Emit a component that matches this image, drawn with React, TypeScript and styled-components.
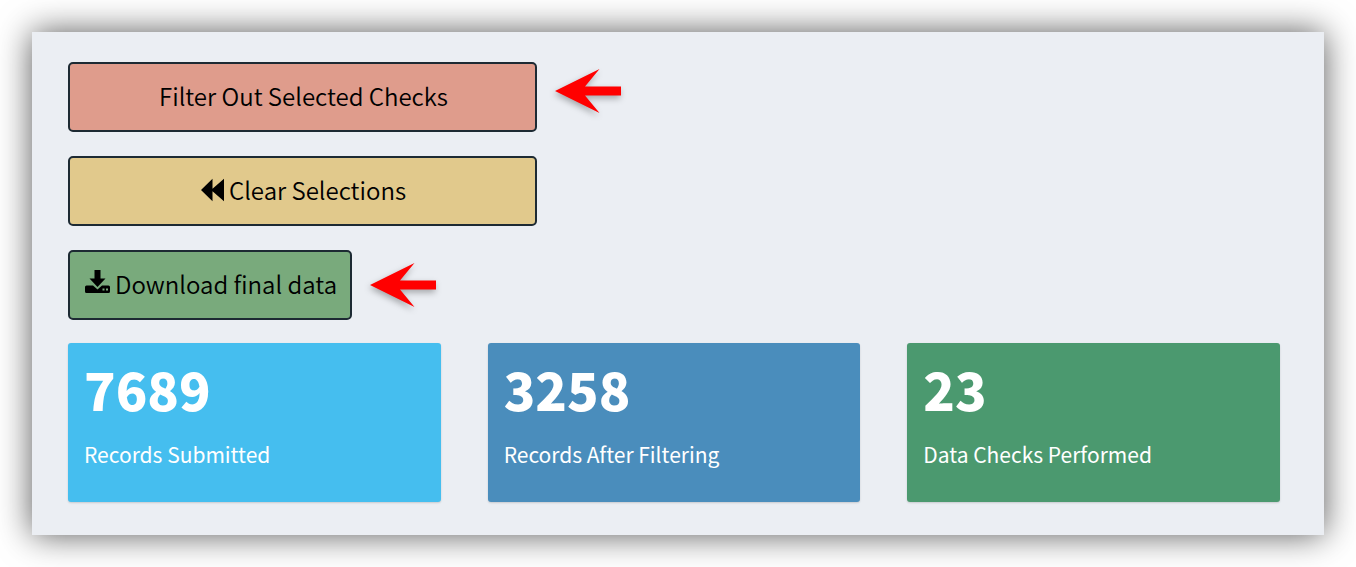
import React from "react";
import styled, { createGlobalStyle } from "styled-components";

const GlobalStyle = createGlobalStyle`
  *, *::before, *::after { box-sizing: border-box; }
  body {
    margin: 0;
    background: #fff;
    font-family: "Noto Sans CJK SC", "Open Sans", sans-serif;
  }
`;

const Page = styled.div`
  padding: 32px;
`;

const Panel = styled.main`
  display: flex;
  flex-direction: column;
  gap: 23px;
  padding: 30px 44px 33px 36px;
  background: #ebeef3;
  box-shadow: 0 0 32px rgba(0, 0, 0, 0.66);
`;

const Actions = styled.div`
  display: flex;
  flex-direction: column;
  gap: 24px;
`;

const ActionRow = styled.div`
  display: flex;
  align-items: center;
  gap: 18px;
`;

const ActionButton = styled.button<{ $color: string; $wide?: boolean }>`
  display: flex;
  align-items: center;
  justify-content: center;
  gap: 5px;
  flex: 0 1 ${(p) => (p.$wide ? "469px" : "auto")};
  height: 70px;
  padding: 0 13px 2px 15px;
  border: 2px solid #1d2a33;
  border-radius: 5px;
  background: ${(p) => p.$color};
  color: #000;
  font-family: inherit;
  font-size: 24px;
  font-weight: 350;
  line-height: 36px;
  white-space: nowrap;
  cursor: pointer;
`;

const Pointer = styled.svg<{ $raised?: boolean }>`
  flex: none;
  overflow: visible;
  margin-bottom: ${(p) => (p.$raised ? "12px" : "0")};
  filter: drop-shadow(-1px 3px 3px rgba(0, 0, 0, 0.3));
`;

const Stats = styled.section`
  display: grid;
  grid-template-columns: repeat(3, 1fr);
  gap: 47px;
`;

const StatCard = styled.article<{ $color: string }>`
  height: 159px;
  padding: 14px 16px;
  border-radius: 3px;
  background: ${(p) => p.$color};
  box-shadow: 0 1px 2px rgba(0, 0, 0, 0.15);
  color: #fff;
`;

const StatValue = styled.h3`
  margin: 0 0 17px;
  font-size: 52px;
  font-weight: 900;
  line-height: 64px;
`;

const StatLabel = styled.p`
  margin: 0;
  font-size: 21px;
  line-height: 32px;
`;

function PointerArrow({ raised }: { raised?: boolean }) {
  return (
    <Pointer $raised={raised} width="66" height="44" viewBox="0 0 66 44" aria-hidden="true">
      <path d="M0 22 44.500 0 30 17.500H66v9H30L44.500 44Z" fill="#f00" />
    </Pointer>
  );
}

function BackwardIcon() {
  return (
    <svg width="23" height="24" viewBox="0 0 23 24" aria-hidden="true">
      <path d="M0 12 11.500 .8V10.800L23 .8V23.200L11.500 13.200V23.200Z" fill="#000" />
    </svg>
  );
}

function DownloadIcon() {
  return (
    <svg width="25" height="28" viewBox="0 0 25 28" aria-hidden="true">
      <path d="M9.500 0h6v8.500h5L12.500 17 4.500 8.500h5Z" fill="#000" />
      <path
        fillRule="evenodd"
        d="M1.500 15.500H8L12.500 19.500 17 15.500h6.500q1.500 0 1.500 1.500v4.500q0 1.500-1.500 1.500h-22Q0 23 0 21.500V17q0-1.500 1.500-1.500ZM17.500 18.500v2h2v-2ZM21 18.500v2h2v-2Z"
        fill="#000"
      />
    </svg>
  );
}

const stats = [
  { value: "7689", label: "Records Submitted", color: "#45beef" },
  { value: "3258", label: "Records After Filtering", color: "#4a8dbc" },
  { value: "23", label: "Data Checks Performed", color: "#4b996f" },
];

export default function App() {
  return (
    <Page>
      <GlobalStyle />
      <Panel>
        <Actions>
          <ActionRow>
            <ActionButton type="button" $color="#df9c8c" $wide>
              Filter Out Selected Checks
            </ActionButton>
            <PointerArrow raised />
          </ActionRow>
          <ActionRow>
            <ActionButton type="button" $color="#e1c98c" $wide>
              <BackwardIcon />
              Clear Selections
            </ActionButton>
          </ActionRow>
          <ActionRow>
            <ActionButton type="button" $color="#79aa7c">
              <DownloadIcon />
              Download final data
            </ActionButton>
            <PointerArrow />
          </ActionRow>
        </Actions>
        <Stats>
          {stats.map((s) => (
            <StatCard key={s.label} $color={s.color}>
              <StatValue>{s.value}</StatValue>
              <StatLabel>{s.label}</StatLabel>
            </StatCard>
          ))}
        </Stats>
      </Panel>
    </Page>
  );
}
